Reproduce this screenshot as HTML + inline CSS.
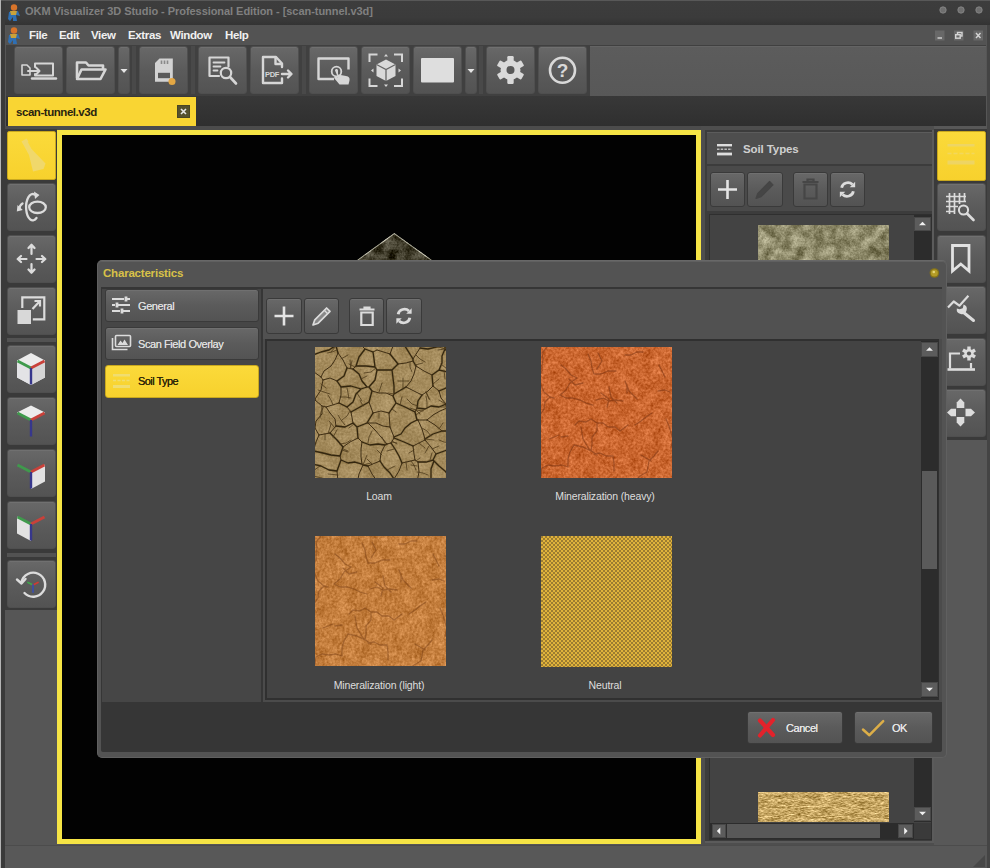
<!DOCTYPE html>
<html lang="en">
<head>
<meta charset="utf-8">
<title>OKM Visualizer 3D Studio</title>
<style>
*{box-sizing:border-box;margin:0;padding:0}
html,body{width:990px;height:868px;overflow:hidden}
body{position:relative;background:#565656;font-family:"Liberation Sans",sans-serif;font-size:11px;color:#e4e4e4}
.a{position:absolute}
.btn{position:absolute;border-radius:3px;background:linear-gradient(#686868,#5b5b5b 50%,#535353);border:1px solid #4f4f4f;box-shadow:inset 0 1px 0 #707070}
.btn.o{border-color:#3a3a3a}
.btn svg{position:absolute;left:-1px;top:-1px;width:calc(100% + 2px);height:calc(100% + 2px);overflow:visible}
.ybtn{position:absolute;border-radius:2px;background:linear-gradient(#fbda3a,#f7d12d);border:1px solid #c9a81e}
.ybtn svg{position:absolute;left:-1px;top:-1px;width:calc(100% + 2px);height:calc(100% + 2px);overflow:visible}
.menu span{position:absolute;top:0;line-height:20px;font-size:11.5px;color:#f0f0f0;font-weight:bold;letter-spacing:-0.35px}
.lbl{position:absolute;text-align:center;font-size:10.5px;color:#dedede;white-space:nowrap;letter-spacing:-0.15px}
.sb{position:absolute;background:#2c2c2c}
.sba{position:absolute;background:#5c5c5c;border:1px solid #484848}
.sba svg{position:absolute;left:0;top:0;width:100%;height:100%}
</style>
</head>
<body>
<!-- SVG filters for soil textures -->
<svg width="0" height="0" style="position:absolute">
<defs>
<filter id="fLoam" x="0" y="0" width="100%" height="100%" color-interpolation-filters="sRGB">
  <feTurbulence type="fractalNoise" baseFrequency="0.06" numOctaves="3" seed="4" result="n1"/>
  <feColorMatrix in="n1" type="matrix" values="1 0 0 0 0  1 0 0 0 0  1 0 0 0 0  0 0 0 0 1" result="g1"/>
  <feTurbulence type="fractalNoise" baseFrequency="0.45" numOctaves="2" seed="9" result="n2"/>
  <feColorMatrix in="n2" type="matrix" values="0 1 0 0 0  0 1 0 0 0  0 1 0 0 0  0 0 0 0 1" result="g2"/>
  <feComposite in="SourceGraphic" in2="g1" operator="arithmetic" k1="0" k2="1" k3="0.14" k4="-0.07" result="a"/>
  <feComposite in="a" in2="g2" operator="arithmetic" k1="0" k2="1" k3="0.18" k4="-0.09" result="b"/>
  <feComposite in="b" in2="SourceAlpha" operator="in"/>
</filter>
<filter id="fGrain" x="0" y="0" width="100%" height="100%" color-interpolation-filters="sRGB">
  <feTurbulence type="fractalNoise" baseFrequency="0.09" numOctaves="4" seed="7" result="n1"/>
  <feColorMatrix in="n1" type="matrix" values="1 0 0 0 0  1 0 0 0 0  1 0 0 0 0  0 0 0 0 1" result="g1"/>
  <feTurbulence type="fractalNoise" baseFrequency="0.4" numOctaves="2" seed="12" result="n2"/>
  <feColorMatrix in="n2" type="matrix" values="0 1 0 0 0  0 1 0 0 0  0 1 0 0 0  0 0 0 0 1" result="g2"/>
  <feComposite in="SourceGraphic" in2="g1" operator="arithmetic" k1="0" k2="1" k3="0.2" k4="-0.1" result="a"/>
  <feComposite in="a" in2="g2" operator="arithmetic" k1="0" k2="1" k3="0.3" k4="-0.15" result="b"/>
  <feComposite in="b" in2="SourceAlpha" operator="in"/>
</filter>
<filter id="fGrainB" x="0" y="0" width="100%" height="100%" color-interpolation-filters="sRGB">
  <feTurbulence type="fractalNoise" baseFrequency="0.09" numOctaves="4" seed="21" result="n1"/>
  <feColorMatrix in="n1" type="matrix" values="1 0 0 0 0  1 0 0 0 0  1 0 0 0 0  0 0 0 0 1" result="g1"/>
  <feTurbulence type="fractalNoise" baseFrequency="0.4" numOctaves="2" seed="26" result="n2"/>
  <feColorMatrix in="n2" type="matrix" values="0 1 0 0 0  0 1 0 0 0  0 1 0 0 0  0 0 0 0 1" result="g2"/>
  <feComposite in="SourceGraphic" in2="g1" operator="arithmetic" k1="0" k2="1" k3="0.2" k4="-0.1" result="a"/>
  <feComposite in="a" in2="g2" operator="arithmetic" k1="0" k2="1" k3="0.28" k4="-0.14" result="b"/>
  <feComposite in="b" in2="SourceAlpha" operator="in"/>
</filter>
<filter id="fGrain2" x="0" y="0" width="100%" height="100%" color-interpolation-filters="sRGB">
  <feTurbulence type="fractalNoise" baseFrequency="0.09" numOctaves="3" seed="3" result="n1"/>
  <feColorMatrix in="n1" type="matrix" values="1 0 0 0 0  1 0 0 0 0  1 0 0 0 0  0 0 0 0 1" result="g1"/>
  <feTurbulence type="fractalNoise" baseFrequency="0.55" numOctaves="2" seed="8" result="n2"/>
  <feColorMatrix in="n2" type="matrix" values="0 1 0 0 0  0 1 0 0 0  0 1 0 0 0  0 0 0 0 1" result="g2"/>
  <feComposite in="SourceGraphic" in2="g1" operator="arithmetic" k1="0" k2="1" k3="0.55" k4="-0.275" result="a"/>
  <feComposite in="a" in2="g2" operator="arithmetic" k1="0" k2="1" k3="0.28" k4="-0.14" result="b"/>
  <feComposite in="b" in2="SourceAlpha" operator="in"/>
</filter>
<filter id="fStraw" x="0" y="0" width="100%" height="100%" color-interpolation-filters="sRGB">
  <feTurbulence type="fractalNoise" baseFrequency="0.08 0.3" numOctaves="3" seed="5" result="n1"/>
  <feColorMatrix in="n1" type="matrix" values="1 0 0 0 0  1 0 0 0 0  1 0 0 0 0  0 0 0 0 1" result="g1"/>
  <feTurbulence type="fractalNoise" baseFrequency="0.3 0.9" numOctaves="2" seed="10" result="n2"/>
  <feColorMatrix in="n2" type="matrix" values="0 1 0 0 0  0 1 0 0 0  0 1 0 0 0  0 0 0 0 1" result="g2"/>
  <feComposite in="SourceGraphic" in2="g1" operator="arithmetic" k1="0" k2="1" k3="0.4" k4="-0.2" result="a"/>
  <feComposite in="a" in2="g2" operator="arithmetic" k1="0" k2="1" k3="0.6" k4="-0.3" result="b"/>
  <feComposite in="b" in2="SourceAlpha" operator="in"/>
</filter>
</defs>
</svg>

<!-- ===== title bar ===== -->
<div class="a" id="titlebar" style="left:0;top:0;width:990px;height:25px;background:linear-gradient(#3d3d3d,#3b3b3b 70%,#333)"></div>
<div class="a" style="left:25px;top:5px;font-size:11px;font-weight:bold;color:#808080;white-space:nowrap;letter-spacing:-0.05px" id="title">OKM Visualizer 3D Studio - Professional Edition - [scan-tunnel.v3d]</div>

<!-- ===== menu bar ===== -->
<div class="a" id="menubar" style="left:6px;top:25px;width:980px;height:20px;background:#535353"></div>
<div class="a menu" style="left:0;top:25px;width:990px;height:20px">
<span style="left:29px">File</span><span style="left:59px">Edit</span><span style="left:91px">View</span><span style="left:128px">Extras</span><span style="left:170px">Window</span><span style="left:225px">Help</span>
</div>

<!-- ===== toolbar ===== -->
<div class="a" id="toolbar" style="left:6px;top:45px;width:980px;height:51px;background:#404040"></div><div class="a" style="left:590px;top:46px;width:396px;height:50px;background:linear-gradient(#5c5c5c,#585858);border-top:1px solid #646464"></div>

<!-- ===== tab band ===== -->
<div class="a" id="tabband" style="left:6px;top:96px;width:980px;height:30px;background:linear-gradient(#383838,#2f2f2f)"></div>
<div class="a" id="tab" style="left:8px;top:97px;width:188px;height:30px;background:#f9d533"></div>
<div class="a" id="tabtxt" style="left:16px;top:105.5px;font-size:11.5px;color:#2a2410;font-weight:bold;letter-spacing:-0.45px">scan-tunnel.v3d</div>


<!-- title icons -->
<svg class="a" style="left:7px;top:3px" width="16" height="19" viewBox="0 0 16 19"><circle cx="7" cy="4.5" r="3.2" fill="#d8742a"/><path d="M2 9 L11 8 L13 13 L9 12 L10 18 L6 18 L6 14 L3 18 L1 16 Z" fill="#2f6fb3"/><path d="M3 8 L10 8 L9 12 L4 12Z" fill="#c9a23a"/></svg>
<svg class="a" style="left:7px;top:26px" width="16" height="19" viewBox="0 0 16 19"><circle cx="7" cy="4.5" r="3.2" fill="#d8742a"/><path d="M2 9 L11 8 L13 13 L9 12 L10 18 L6 18 L6 14 L3 18 L1 16 Z" fill="#2f6fb3"/><path d="M3 8 L10 8 L9 12 L4 12Z" fill="#c9a23a"/></svg>
<!-- window dots -->
<svg class="a" style="left:930px;top:2px" width="60" height="18" viewBox="0 0 60 18"><g fill="#6f6f6f" stroke="#8a8a8a" stroke-width="0.8"><circle cx="13" cy="8" r="3.2"/><circle cx="31" cy="8" r="3.2"/><circle cx="49" cy="8" r="3.2"/></g></svg>
<!-- MDI controls -->
<svg class="a" style="left:932px;top:28px" width="56" height="14" viewBox="0 0 56 14"><g fill="#686868"><rect x="3" y="2.500" width="9.500" height="10"/><rect x="22" y="2.500" width="9.500" height="10"/><rect x="41.500" y="2.500" width="9.500" height="10"/></g><g stroke="#d4d4d4" stroke-width="1.400" fill="none"><path d="M5.500 10h4.500"/><rect x="25.500" y="4.500" width="4.500" height="3.500"/><rect x="23.700" y="6.700" width="4.500" height="3.500" fill="#686868"/><path d="M44 5l4.500 5M48.500 5l-4.500 5"/></g></svg>

<!-- toolbar buttons -->
<div class="btn" style="left:14px;top:46px;width:49px;height:48px"><svg viewBox="0 0 49 48"><g fill="none" stroke="#d6d6d6" stroke-width="2" stroke-linejoin="round" stroke-linecap="round"><path d="M8 19h5l3 3v7h-8z" stroke-width="1.6"/><path d="M14 25h11M22 21.5l3.5 3.5-3.5 3.5"/><path d="M21 21v-3.500h18v12h-18v-1.500"/><path d="M18 32.500h24" stroke-width="2.4"/></g></svg></div>
<div class="btn" style="left:66px;top:46px;width:49px;height:48px"><svg viewBox="0 0 49 48"><path d="M11 32V16.500h9l2.500 3h14.500v3.500" fill="none" stroke="#d6d6d6" stroke-width="2.6" stroke-linejoin="round"/><path d="M15.500 23.500h24l-5 9.500h-23.500z" fill="#555" stroke="#d6d6d6" stroke-width="2.600" stroke-linejoin="round"/></svg></div>
<div class="btn" style="left:118px;top:46px;width:12px;height:48px"><svg viewBox="0 0 12 48"><path d="M2.500 23h7l-3.500 4z" fill="#e6e6e6"/></svg></div>
<div class="a" style="left:132px;top:46px;width:4px;height:48px;background:#494949"></div>
<div class="btn" style="left:139px;top:46px;width:49px;height:48px"><svg viewBox="0 0 49 48"><path d="M16 17l4.500-4.600h13.300v23.300h-17.800z" fill="#d2d2d2"/><rect x="19" y="26.800" width="12" height="5.400" fill="#5a5a5a"/><path d="M22.500 14.500v3.500M25.500 14.500v3.500M28.500 14.500v3.500" stroke="#8a8a8a" stroke-width="1.600"/><circle cx="33" cy="35.500" r="3.500" fill="#e3a744"/></svg></div>
<div class="a" style="left:191px;top:46px;width:4px;height:48px;background:#494949"></div>
<div class="btn" style="left:198px;top:46px;width:49px;height:48px"><svg viewBox="0 0 49 48"><g fill="none" stroke="#d6d6d6" stroke-width="2.200" stroke-linecap="round" stroke-linejoin="round"><path d="M21 30h-9.500v-18.500h19v9"/><path d="M15.500 16.500h11M15.500 20.500h7M15.500 24.500h4" stroke-width="1.800"/><circle cx="28" cy="27" r="5.200"/><path d="M32 31l6 6.500" stroke-width="2.600"/></g></svg></div>
<div class="btn" style="left:250px;top:46px;width:49px;height:48px"><svg viewBox="0 0 49 48"><g fill="none" stroke="#d6d6d6" stroke-width="2.400" stroke-linejoin="round" stroke-linecap="round"><path d="M32 21v-3.500l-6-6.500h-13v26h19v-4.500"/><path d="M25.500 11.500v6.500h6"/><path d="M32 28h9M38 24.500l3.500 3.500-3.500 3.500"/></g><text x="15" y="31" font-family="Liberation Sans,sans-serif" font-size="7.500" font-weight="bold" fill="#d6d6d6" letter-spacing="-0.3">PDF</text></svg></div>
<div class="a" style="left:302px;top:46px;width:4px;height:48px;background:#494949"></div>
<div class="btn" style="left:309px;top:46px;width:49px;height:48px"><svg viewBox="0 0 49 48"><path d="M25 33h-15.500v-20.500h30v11" fill="none" stroke="#d6d6d6" stroke-width="2.400" stroke-linejoin="round"/><circle cx="27.500" cy="25.500" r="4.800" fill="none" stroke="#d6d6d6" stroke-width="1.800"/><path d="M26 24.500c0-2 3-2 3 0v4l8 1.500c3 .5 4 2 3.500 4.500l-1 4h-9l-5-6c-1-1.500.5-3 2-2l1.500 1z" fill="#d6d6d6"/></svg></div>
<div class="btn" style="left:361px;top:46px;width:49px;height:48px"><svg viewBox="0 0 49 48"><g fill="none" stroke="#d6d6d6" stroke-width="2"><path d="M8.500 16v-7.500h8M33 8.500h8v7.500M41 32.500v7.500h-8M16.500 40h-8v-7.500"/></g><path d="M25 13.500l9.500 5v11.500l-9.500 5-9.500-5v-11.500z" fill="#d9d9d9"/><path d="M15.500 18.500l9.500 5 9.500-5M25 23.500v11.500" fill="none" stroke="#666" stroke-width="1.300"/><path d="M25 8l2 2.500h-4zM25 41l2-2.500h-4zM10 24.500l2.500-2v4zM40 24.500l-2.500-2v4z" fill="#d6d6d6"/></svg></div>
<div class="btn" style="left:413px;top:46px;width:49px;height:48px"><svg viewBox="0 0 49 48"><rect x="8" y="12" width="33" height="24.500" rx="1" fill="#dedede"/></svg></div>
<div class="btn" style="left:465px;top:46px;width:12px;height:48px"><svg viewBox="0 0 12 48"><path d="M2.500 23h7l-3.500 4z" fill="#e6e6e6"/></svg></div>
<div class="a" style="left:479px;top:46px;width:4px;height:48px;background:#494949"></div>
<div class="btn" style="left:486px;top:46px;width:49px;height:48px"><svg viewBox="0 0 49 48"><g transform="translate(24.500 24)"><g fill="#d9d9d9"><circle r="10"/><g id="gt"><rect x="-3.200" y="-14" width="6.400" height="28" rx="1.200"/></g><use href="#gt" transform="rotate(60)"/><use href="#gt" transform="rotate(120)"/></g><circle r="4" fill="#585858"/></g></svg></div>
<div class="btn" style="left:538px;top:46px;width:49px;height:48px"><svg viewBox="0 0 49 48"><circle cx="24.500" cy="24.300" r="12.500" fill="none" stroke="#d9d9d9" stroke-width="2.600"/><text x="24.500" y="31" text-anchor="middle" font-family="Liberation Sans,sans-serif" font-size="19" font-weight="bold" fill="#d9d9d9">?</text></svg></div>
<!-- tab close -->
<div class="a" style="left:177px;top:105px;width:13px;height:13px;background:#55512e;border:1px solid #4a4624"><svg class="a" style="left:0;top:0" width="11" height="11" viewBox="0 0 11 11"><path d="M3 3l5 5M8 3l-5 5" stroke="#e6e6e6" stroke-width="1.600"/></svg></div>

<div class="a" style="left:5px;top:126px;width:982px;height:4px;background:#4c4c4c"></div>
<!-- ===== viewport ===== -->
<div class="a" id="viewport" style="left:57px;top:130px;width:644px;height:714px;background:#020202;border:5px solid #f6e445"></div>


<!-- ===== left toolbar ===== -->
<div class="a" style="left:5px;top:129px;width:52px;height:481px;background:#3a3a3a"></div>
<div class="ybtn" style="left:7px;top:131px;width:49px;height:49px"><svg viewBox="0 0 49 49"><g fill="#efd976" opacity="0.85"><path d="M15.500 12l4.500-2.500 4.500 8.500 14 14.500-2 5.500-10.500 2.500-4-16.500z"/><path d="M14.500 10.500l5-3 2 3-5 3z"/></g></svg></div>
<div class="btn" style="left:7px;top:183px;width:49px;height:48px"><svg viewBox="0 0 49 48"><g fill="none" stroke="#dcdcdc" stroke-width="2.300" stroke-linecap="round"><ellipse cx="30.500" cy="24.300" rx="8.300" ry="5.700"/><path d="M27.500 11.500A6.600 13.200 0 1 0 29.500 35"/><path d="M15.500 20.500Q12.500 22.500 12.500 25.500"/></g><path d="M27 8.500l5.500 3.500-4.500 4zM9.800 28.500l.7-6.500 5.300 5z" fill="#dcdcdc"/></svg></div>
<div class="btn" style="left:7px;top:235px;width:49px;height:48px"><svg viewBox="0 0 49 48"><g fill="none" stroke="#dcdcdc" stroke-width="2.200" stroke-linecap="round" stroke-linejoin="round"><path d="M24.500 19v-8.500M21.500 13l3-3.300 3 3.300M24.500 29v8M21.500 34.500l3 3.300 3-3.300M19.500 24h-8M14 21l-3.300 3 3.300 3M29.500 24h8M35 21l3.300 3-3.300 3"/></g></svg></div>
<div class="btn" style="left:7px;top:287px;width:49px;height:48px"><svg viewBox="0 0 49 48"><path d="M15.300 21v-10.700h22v22h-11.500" fill="none" stroke="#dcdcdc" stroke-width="2.200"/><rect x="10.500" y="23" width="13.500" height="14" fill="#d8d8d8"/><path d="M25.500 22l7-7.500M27.500 14h5.500v5.500" fill="none" stroke="#dcdcdc" stroke-width="2.200"/></svg></div>
<div class="a" style="left:7px;top:338px;width:49px;height:4px;background:#525252"></div>
<div class="btn" style="left:7px;top:345px;width:49px;height:48px"><svg viewBox="0 0 49 48"><path d="M24 8l14 7.500v17l-14 7.500-14-7.500v-17z" fill="#ececec"/><path d="M24 23l14-7.500v17l-14 7.500z" fill="#d6d6d6"/><path d="M24 23l-14-7.500v17l14 7.500z" fill="#e3e3e6"/><g stroke-width="2.800" stroke-linecap="butt"><path d="M24 23L10.500 16" stroke="#3f9a4c"/><path d="M24 23L37.500 16" stroke="#c9413a"/><path d="M24 23V39.500" stroke="#37378c" stroke-width="2.400"/></g></svg></div>
<div class="btn" style="left:7px;top:397px;width:49px;height:48px"><svg viewBox="0 0 49 48"><path d="M24 8.500l14 7-14 7.500-14-7.500z" fill="#ececec"/><g stroke-width="2.800" stroke-linecap="butt"><path d="M24 23L10.500 16" stroke="#3f9a4c"/><path d="M24 23L37.500 16" stroke="#c9413a"/><path d="M24 23V39.500" stroke="#37378c" stroke-width="2.400"/></g></svg></div>
<div class="btn" style="left:7px;top:449px;width:49px;height:48px"><svg viewBox="0 0 49 48"><path d="M24 23l14-7.500v17l-14 7.500z" fill="#e2e2e2"/><g stroke-width="2.800" stroke-linecap="butt"><path d="M24 23L10.500 16" stroke="#3f9a4c"/><path d="M24 23L37.500 16" stroke="#c9413a"/><path d="M24 23V39.500" stroke="#37378c" stroke-width="2.400"/></g></svg></div>
<div class="btn" style="left:7px;top:501px;width:49px;height:48px"><svg viewBox="0 0 49 48"><path d="M24 23l-14-7.500v17l14 7.500z" fill="#e2e2e2"/><g stroke-width="2.800" stroke-linecap="butt"><path d="M24 23L10.500 16" stroke="#3f9a4c"/><path d="M24 23L37.500 16" stroke="#c9413a"/><path d="M24 23V39.500" stroke="#37378c" stroke-width="2.400"/></g></svg></div>
<div class="a" style="left:7px;top:553px;width:49px;height:4px;background:#525252"></div>
<div class="btn" style="left:7px;top:560px;width:49px;height:48px"><svg viewBox="0 0 49 48"><path d="M14.500 22a12 12 0 1 1 3 11" fill="none" stroke="#dcdcdc" stroke-width="2.400" stroke-linecap="round"/><path d="M10 19.500l4.500 4 4-4.500" fill="none" stroke="#dcdcdc" stroke-width="2.400" stroke-linecap="round" stroke-linejoin="round"/><g stroke-width="1.800" stroke-linecap="round"><path d="M26 25l-5-2.500" stroke="#3fa64a"/><path d="M26 25l5-2.500" stroke="#d03a32"/><path d="M26 25v7" stroke="#3c4ea8"/></g></svg></div>


<!-- ===== right panel ===== -->
<div class="a" style="left:701px;top:126px;width:289px;height:719px;background:#4e4e4e"></div><div class="a" style="left:934px;top:126px;width:53px;height:719px;background:#585858"></div>
<div class="a" style="left:705px;top:130px;width:229px;height:713px;background:#3c3c3c;border-right:2px solid #5b5b5b;border-bottom:2px solid #5b5b5b"></div>
<div class="a" id="rphead" style="left:707px;top:132px;width:225px;height:32px;background:#4e4e4e;border-top:1px solid #5c5c5c"></div>
<svg class="a" style="left:716px;top:143px" width="18" height="14" viewBox="0 0 18 14"><g fill="#dedede"><rect x="1" y="1" width="15" height="2.400"/><rect x="1" y="9.600" width="15" height="2.800"/></g><path d="M1 6.300h15" stroke="#bdbdbd" stroke-width="1.400" stroke-dasharray="2.500 1.200"/></svg>
<div class="a" style="left:743px;top:143px;font-size:11.500px;font-weight:bold;color:#d0d0d0;letter-spacing:-0.1px">Soil Types</div>
<div class="a" style="left:707px;top:166px;width:225px;height:45px;background:#4a4a4a"></div>
<div class="btn o" style="left:710px;top:172px;width:35px;height:35px"><svg viewBox="0 0 35 35"><path d="M17.500 8v19M8 17.500h19" stroke="#e4e4e4" stroke-width="2.600"/></svg></div>
<div class="btn o" style="left:747px;top:172px;width:36px;height:35px"><svg viewBox="0 0 36 35"><path d="M9 26.500l1.800-5.200 11.800-11.800 3.400 3.400-11.800 11.800z" fill="#454545" stroke="#454545" stroke-width="1.200" stroke-linejoin="round"/></svg></div>
<div class="btn o" style="left:793px;top:172px;width:35px;height:35px"><svg viewBox="0 0 35 35"><g fill="none" stroke="#464646" stroke-width="2.200"><path d="M11.500 12.500h12v14h-12z"/><path d="M9.500 10h16M14.500 9.500v-2h6v2"/></g></svg></div>
<div class="btn o" style="left:830px;top:172px;width:35px;height:35px"><svg viewBox="0 0 35 35"><g transform="translate(17.500 17.500) scale(0.9) translate(-17.500 -17.500)"><g fill="none" stroke="#dcdcdc" stroke-width="3.100"><path d="M11 15.500a7 6.500 0 0 1 12-3.500"/><path d="M24 19.500a7 6.500 0 0 1-12 3.500"/></g><path d="M26 9v6h-6zM9 26v-6h6z" fill="#dcdcdc"/></g></svg></div>
<div class="a" style="left:709px;top:214px;width:223px;height:626px;background:#434343;border:1px solid #2f2f2f"></div>
<!-- list scrollbars -->
<div class="sb" style="left:914px;top:215px;width:17px;height:607px"></div>
<div class="sba" style="left:914px;top:217px;width:17px;height:14px"><svg viewBox="0 0 17 14"><path d="M4.500 8.500l4-4 4 4z" fill="#f0f0f0"/></svg></div>
<div class="sba" style="left:914px;top:807px;width:17px;height:14px"><svg viewBox="0 0 17 14"><path d="M4.500 4.500l4 4 4-4z" fill="#f0f0f0"/></svg></div>
<div class="sb" style="left:710px;top:823px;width:204px;height:16px"></div>
<div class="a" style="left:914px;top:823px;width:17px;height:16px;background:#3a3a3a"></div>
<div class="sba" style="left:712px;top:824px;width:14px;height:14px"><svg viewBox="0 0 14 14"><path d="M8.500 3l-4 4 4 4z" fill="#f0f0f0"/></svg></div>
<div class="sba" style="left:898px;top:824px;width:15px;height:14px"><svg viewBox="0 0 15 14"><path d="M6 3l4 4-4 4z" fill="#f0f0f0"/></svg></div>
<div class="a" style="left:727px;top:824px;width:153px;height:14px;background:#585858"></div>
<!-- soil thumbs in right list -->
<svg class="a" style="left:758px;top:225px" width="131" height="40"><rect width="131" height="40" fill="#8c8868" filter="url(#fGrain2)"/></svg>
<svg class="a" style="left:758px;top:792px" width="131" height="30"><rect width="131" height="30" fill="#c6a663" filter="url(#fStraw)"/></svg>

<!-- ===== right toolbar ===== -->
<div class="a" style="left:934px;top:129px;width:53px;height:311px;background:#3a3a3a"></div>

<div class="ybtn" style="left:937px;top:131px;width:49px;height:50px"><svg viewBox="0 0 49 50"><g fill="#ecd570" opacity="0.8"><rect x="10.500" y="13" width="27" height="2.500"/><rect x="10.500" y="29.500" width="27" height="4"/></g><path d="M10.500 22.500h27" stroke="#efd978" stroke-width="1.600" stroke-dasharray="4 2" opacity="0.6"/></svg></div>
<div class="btn" style="left:937px;top:183px;width:49px;height:48px"><svg viewBox="0 0 49 48"><g fill="none" stroke="#dcdcdc" stroke-width="1.700"><path d="M9 13.500h20M9 18.500h20M9 23.500h12M9 28.500h9M12.500 10v21M17.500 10v21M22.500 10v11M27.500 10v9"/><circle cx="26.500" cy="27" r="4.600" stroke-width="2"/><path d="M30 30.500l6.500 6.500" stroke-width="2.600" stroke-linecap="round"/></g></svg></div>
<div class="btn" style="left:937px;top:235px;width:49px;height:48px"><svg viewBox="0 0 49 48"><path d="M15.500 10.500h16.500v25.500l-8.200-7-8.300 7z" fill="none" stroke="#e2e2e2" stroke-width="2.800" stroke-linejoin="miter"/></svg></div>
<div class="btn" style="left:937px;top:286px;width:49px;height:48px"><svg viewBox="0 0 49 48"><path d="M11 21.500l5.700-6 5.700 4.200 9-10" fill="none" stroke="#dcdcdc" stroke-width="2.200" stroke-linejoin="round"/><path d="M26 26l10.500 8.500" stroke="#dcdcdc" stroke-width="3" stroke-linecap="round"/><path d="M19.800 22.500a5 5 0 1 0 6.800-4l-.8 3.800-3.200 1z" fill="#dcdcdc"/></svg></div>
<div class="btn" style="left:937px;top:338px;width:49px;height:48px"><svg viewBox="0 0 49 48"><path d="M23 15.500h-10v15M34 25v5.500" fill="none" stroke="#dcdcdc" stroke-width="2.200"/><path d="M10.500 31.500h27.500" stroke="#dcdcdc" stroke-width="2.600"/><g transform="translate(32 15.500)" fill="#dcdcdc"><circle r="4.600"/><rect x="-1.700" y="-7" width="3.400" height="14"/><rect x="-1.700" y="-7" width="3.400" height="14" transform="rotate(60)"/><rect x="-1.700" y="-7" width="3.400" height="14" transform="rotate(120)"/><circle r="2.100" fill="#585858"/></g></svg></div>
<div class="btn" style="left:937px;top:389px;width:49px;height:48px"><svg viewBox="0 0 49 48"><g fill="#dcdcdc"><path d="M23.500 9.500l3.800 4v5.500h-7.600v-5.500z"/><path d="M23.500 37.500l3.800-4v-5.500h-7.600v5.500z"/><path d="M10 23.500l4-3.800h5v7.600h-5z"/><path d="M38 23.500l-4-3.800h-5.500v7.600h5.500z"/></g></svg></div>


<svg class="a" style="left:350px;top:228px" width="90" height="36" viewBox="0 0 90 36"><path d="M44.300 5.500L7 32.500H82z" fill="#3b3726" stroke="#b4b2a0" stroke-width="1.200" stroke-linejoin="round" filter="url(#fGrain2)"/></svg>
<!-- ===== Characteristics dialog ===== -->
<div class="a" id="dlg" style="left:97px;top:260px;width:850px;height:498px;background:#535353;border:1px solid #606060;border-top-color:#686868;border-radius:5px;box-shadow:inset 0 1px 0 #606060"></div>
<div class="a" style="left:103px;top:267px;font-size:11.500px;font-weight:bold;color:#d8c148;letter-spacing:-0.2px">Characteristics</div>
<svg class="a" style="left:927px;top:266px" width="14" height="14" viewBox="0 0 14 14"><circle cx="7.400" cy="7" r="4.800" fill="#85731a"/><circle cx="7.400" cy="7" r="3.500" fill="#b49c26"/><circle cx="6.800" cy="6" r="1.300" fill="#e4d678"/></svg>
<div class="a" style="left:101px;top:287px;width:841px;height:465px;background:#363636;border-radius:0 0 2px 2px"></div>
<!-- sidebar -->
<div class="a" style="left:102px;top:289px;width:159px;height:413px;background:#464646"></div>
<div class="btn o" style="left:105px;top:289px;width:154px;height:33px"><svg viewBox="0 0 154 33"><g stroke="#dcdcdc" stroke-width="1.800" fill="none"><path d="M7 10h12M21 10h4M7 16h3M13 16h12M7 22h8M18 22h7"/><path d="M21 7.500v5M12 13.500v5M17 19.500v5" stroke-width="2.800"/></g></svg></div>
<div class="a" style="left:138px;top:300px;font-size:11px;color:#dcdcdc;letter-spacing:-0.4px;text-shadow:0 0 0.5px #dcdcdc">General</div>
<div class="btn o" style="left:105px;top:327px;width:154px;height:33px"><svg viewBox="0 0 154 33"><g stroke="#dcdcdc" stroke-width="1.600" fill="none"><rect x="10.500" y="8.500" width="15" height="11" rx="1"/><path d="M7.500 11v11.500h15"/></g><path d="M12.500 18l3-4.500 2 2.500 2-3.500 3.500 5.500z" fill="#dcdcdc"/></svg></div>
<div class="a" style="left:138px;top:338px;font-size:11px;color:#dcdcdc;letter-spacing:-0.42px;text-shadow:0 0 0.5px #dcdcdc">Scan Field Overlay</div>
<div class="ybtn" style="left:105px;top:365px;width:154px;height:33px;border-radius:3px"><svg viewBox="0 0 154 33"><g fill="#f0dd70"><rect x="8" y="9" width="17" height="2.500"/><rect x="8" y="20" width="17" height="3"/></g><path d="M8 15.500h17" stroke="#f0dd70" stroke-width="1.600" stroke-dasharray="3 1.500"/></svg></div>
<div class="a" style="left:138px;top:375px;font-size:11px;color:#2c2508;letter-spacing:-0.55px;text-shadow:0 0 0.5px #2c2508">Soil Type</div>
<!-- content -->
<div class="a" style="left:263px;top:289px;width:679px;height:413px;background:#4b4b4b"></div>
<div class="a" style="left:263px;top:289px;width:679px;height:50px;background:#515151"></div>
<div class="btn o" style="left:266px;top:298px;width:36px;height:36px"><svg viewBox="0 0 36 36"><path d="M18 8.500v19M8.500 18h19" stroke="#e4e4e4" stroke-width="2.600"/></svg></div>
<div class="btn o" style="left:304px;top:298px;width:35px;height:36px"><svg viewBox="0 0 35 36"><path d="M9 27l1.800-5.200 11.800-11.800 3.400 3.400-11.800 11.800z" fill="#dcdcdc" fill-opacity="0.350" stroke="#dcdcdc" stroke-width="1.700" stroke-linejoin="round"/><path d="M20.300 12.300l3.400 3.400" stroke="#dcdcdc" stroke-width="1.300"/></svg></div>
<div class="btn o" style="left:349px;top:298px;width:35px;height:36px"><svg viewBox="0 0 35 36"><g fill="none" stroke="#dcdcdc" stroke-width="2.200"><path d="M12.300 14.500h11.400v12.500h-11.400z"/><path d="M10.500 11.500h15M15.500 11v-1.500h5v1.500"/></g></svg></div>
<div class="btn o" style="left:386px;top:298px;width:36px;height:36px"><svg viewBox="0 0 36 36"><g transform="translate(18 18) scale(0.9) translate(-18 -18)"><g fill="none" stroke="#dcdcdc" stroke-width="3.100"><path d="M11.500 16a7 6.500 0 0 1 12-3.500"/><path d="M24.500 20a7 6.500 0 0 1-12 3.500"/></g><path d="M26.500 9.500v6h-6zM9.500 26.500v-6h6z" fill="#dcdcdc"/></g></svg></div>
<div class="a" id="dlist" style="left:265px;top:339px;width:674px;height:361px;background:#434343;border:2px solid #303030;border-right-width:1px"></div>
<div class="sb" style="left:921px;top:341px;width:17px;height:357px"></div>
<div class="sba" style="left:921px;top:342px;width:17px;height:15px"><svg viewBox="0 0 17 15"><path d="M4.500 9l4-4 4 4z" fill="#f0f0f0"/></svg></div>
<div class="sba" style="left:921px;top:682px;width:17px;height:15px"><svg viewBox="0 0 17 15"><path d="M4.500 5.500l4 4 4-4z" fill="#f0f0f0"/></svg></div>
<div class="a" style="left:922px;top:471px;width:15px;height:98px;background:#5a5a5a"></div>
<!-- soil tiles -->
<svg class="a" style="left:315px;top:347px" width="131" height="131" viewBox="0 0 131 131"><rect width="131" height="131" fill="#a58c5d" filter="url(#fLoam)"/><g fill="none" stroke-linecap="round" stroke-linejoin="round"><path d="M135 130L130 124L124 119L119 114M62 23L70 23L77 23M54 55L45 60L36 65M52 40L47 34L44 27L38 22M132 61L132 69L135 76L134 84M25 109L16 108L8 106L-1 104M21 79L30 80L38 76M58 5L59 12L60 20M60 20L51 19L41 19M48 118L53 119M102 73L96 76L90 81L86 87L79 90M143 25L133 25L124 23M77 23L78 31L79 39L79 47M32 21L29 29L22 34M75 7L83 17M81 56L74 66M103 73L102 73M42 80L38 76M127 84L134 84M124 44L131 41L139 40L145 35M47 117L40 115L33 116L26 113M101 19L98 14M132 103L121 107M46 42L41 47L38 55L32 60M54 40L60 33L62 23M83 17L77 23M32 60L24 56M124 23L117 28M100 65L90 60L81 56M154 -1L146 -2L138 -1L130 0M118 113L121 107M47 95L55 98L63 97L70 98M78 49L81 56M129 -1L121 -0L113 2L105 1M124 23L127 16L127 9L130 2M98 14L98 12M-3 117L-1 126L-1 136M130 0L129 -1M147 20L142 14L136 8L130 2M131 57L124 60L116 59L110 62L102 61M26 40L36 39L46 42M127 84L118 87L110 92M57 44L54 55M65 114L69 120L75 126L79 132M98 12L93 4L88 -4L82 -10M118 113L119 114M133 60L132 61M58 5L50 2M-2 8L6 5L14 3L20 -1M52 40L46 42M102 73L100 65M42 80L52 76M54 40L57 44M0 53L0 52M118 39L117 28M52 76L58 66M28 100L22 93L15 86M107 48L103 54L102 61M62 23L60 20M70 98L72 97M26 113L22 124M87 116L84 109L80 102L76 96M25 109L28 100M26 40L22 34M43 91L42 80M-3 117L6 119L14 123L22 124M98 99L89 95L79 91M50 2L44 10L41 19M79 47L91 40M21 -1L23 6M78 49L79 47M103 115L111 115L118 113M130 2L130 0M113 139L116 131L116 122L119 114M-1 104L-1 102" stroke="#7a6338" stroke-width="2.500" opacity="0.4"/><path d="M135 130L130 124L124 119L119 114M62 23L70 23L77 23M54 55L45 60L36 65M52 40L47 34L44 27L38 22M132 61L132 69L135 76L134 84M25 109L16 108L8 106L-1 104M21 79L30 80L38 76M58 5L59 12L60 20M60 20L51 19L41 19M48 118L53 119M102 73L96 76L90 81L86 87L79 90M143 25L133 25L124 23M77 23L78 31L79 39L79 47M32 21L29 29L22 34M75 7L83 17M81 56L74 66M103 73L102 73M42 80L38 76M127 84L134 84M124 44L131 41L139 40L145 35M47 117L40 115L33 116L26 113M101 19L98 14M132 103L121 107M46 42L41 47L38 55L32 60M54 40L60 33L62 23M83 17L77 23M32 60L24 56M124 23L117 28M100 65L90 60L81 56M154 -1L146 -2L138 -1L130 0M118 113L121 107M47 95L55 98L63 97L70 98M78 49L81 56M129 -1L121 -0L113 2L105 1M124 23L127 16L127 9L130 2M98 14L98 12M-3 117L-1 126L-1 136M130 0L129 -1M147 20L142 14L136 8L130 2M131 57L124 60L116 59L110 62L102 61M26 40L36 39L46 42M127 84L118 87L110 92M57 44L54 55M65 114L69 120L75 126L79 132M98 12L93 4L88 -4L82 -10M118 113L119 114M133 60L132 61M58 5L50 2M-2 8L6 5L14 3L20 -1M52 40L46 42M102 73L100 65M42 80L52 76M54 40L57 44M0 53L0 52M118 39L117 28M52 76L58 66M28 100L22 93L15 86M107 48L103 54L102 61M62 23L60 20M70 98L72 97M26 113L22 124M87 116L84 109L80 102L76 96M25 109L28 100M26 40L22 34M43 91L42 80M-3 117L6 119L14 123L22 124M98 99L89 95L79 91M50 2L44 10L41 19M79 47L91 40M21 -1L23 6M78 49L79 47M103 115L111 115L118 113M130 2L130 0M113 139L116 131L116 122L119 114M-1 104L-1 102" stroke="#33260f" stroke-width="1.300"/><path d="M131 57L133 60M54 40L52 40M11 60L24 56M0 52L6 43L8 33M20 -1L21 -1M54 55L58 66M4 88L1 95L-1 102M26 113L25 109M38 22L32 21M47 117L48 118M79 132L79 133M28 100L35 95L43 91M-7 18L-1 25L6 30M101 19L99 27L96 34L91 40M124 44L126 51L131 57M52 76L53 76M112 73L118 68L125 64L132 61M100 113L103 115M117 28L109 24L101 19M53 76L61 76L68 79L75 80M112 73L103 73M79 91L79 90M11 60L15 66L20 72L21 79M87 116L84 124L79 132M146 117L140 110L132 103M74 66L75 80M53 119L65 114M102 135L104 125L103 115M107 48L113 44L118 39M100 113L87 116M22 34L15 31L8 33M107 48L99 44L91 40M102 61L100 65M26 40L26 48L24 56M98 99L99 107L100 113M47 95L43 91M83 17L91 16L98 14M105 1L98 12M76 96L79 91M36 65L38 76M22 124L23 134M32 21L28 13L23 6M112 73L120 78L127 84M57 44L64 46L71 46L78 49M103 73L107 82L110 92M53 76L60 83L66 90L72 97M136 59L133 60M15 86L21 79M47 117L46 110L46 102L47 95M8 33L6 30M75 80L79 90M53 119L57 127L62 134L66 142M62 3L58 5M7 59L11 60M76 96L72 97M23 6L20 13L16 19L9 24L6 30M0 81L4 88M98 99L110 93M110 93L110 92M129 -7L129 -1M32 60L36 65M4 88L15 86M62 3L75 7M48 118L44 127L42 137M137 92L132 103M121 107L116 100L110 93M38 22L41 19M-3 116L-1 104M58 66L66 64L74 66M21 -1L28 -4L36 -4L43 -5M65 114L66 106L70 98M7 59L0 53M0 81L1 74L7 67L7 59M124 44L118 39M75 7L78 -1L82 -10M50 2L43 -5" stroke="#3f2e14" stroke-width="1"/><path d="M101 8L105 12L110 15M78 -1L71 -1M129 -3L120 0M35 22L37 14M111 45L115 53M72 123L80 119M114 99L110 106M79 102L72 104M18 90L22 83M102 125L108 126L113 128M40 20L34 17M48 118L56 116M64 66L64 71M36 22L35 13M126 17L132 22M135 96L129 95L124 93M101 68L105 65L109 63M132 61L129 56L124 53M39 77L34 81M1 96L-5 95L-10 91M3 43L9 45L15 47M133 60L142 61M28 102L33 104M130 0L138 -5M94 34L88 34L83 34M23 128L13 127M104 96L110 101M6 37L11 41M30 78L26 73L23 68M116 89L112 84L107 81M134 60L132 53M111 45L114 52M143 114L147 110M46 32L52 29M101 63L105 67M95 15L95 20L97 25M77 94L82 97M25 97L31 96L36 93M85 58L87 50M100 18L108 16M88 42L88 36L88 31M-2 129L7 131M57 117L52 112M110 92L119 93M91 115L92 123M25 50L31 50L36 51M-2 124L5 119M21 -1L16 5M32 41L33 46L34 52M64 45L67 36M20 81L14 74M67 108L62 103M53 96L54 90L57 84M115 113L117 106M10 87L10 93M99 103L94 106M117 102L124 99M129 -5L122 -6M103 59L97 57L92 52M9 59L6 65L5 71M101 114L105 111M129 -4L136 -8M61 21L56 25L49 26M77 95L82 96M96 114L99 118L101 123M143 -0L143 5M129 23L130 32M77 62L81 65M42 46L47 54M130 2L124 0L120 -3M71 98L67 90M48 118L50 113L52 108M26 12L33 8M118 37L124 32M27 103L33 105M79 132L74 132L69 132M101 63L95 61M79 47L73 46M13 87L16 77M101 63L108 64M48 59L45 53M130 2L123 3M131 41L134 46L138 51M124 82L128 76M35 64L32 69L27 73M22 3L17 5L12 6M133 60L126 60M112 60L112 55L111 49M18 58L16 53L13 48M102 119L96 118" stroke="#4d3a1a" stroke-width="0.8"/></g></svg>
<svg class="a" style="left:541px;top:347px" width="131" height="131" viewBox="0 0 131 131"><rect width="131" height="131" fill="#cb6730" filter="url(#fGrain)"/><g fill="none" stroke="#7a3414" stroke-width="1.300" stroke-linecap="round" stroke-linejoin="round" opacity="0.55"><path d="M57 6l4 8-5 8M28 32l6 6 8-2M68 40l2 10 6 6M84 34l4 10 8 8M60 46l8 6-2 8M40 80l2 12 6 10 8 6M8 92l10-4M100 108l10 6M118 18l6 12M1 6L2 12L1 18L1 24M1 24L-1 28M10 -8L6 -0L1 6M10 -8L16 -5L22 -5L29 -6M29 -6L31 -3M9 50L3 45L0 38M9 50L13 51M19 48L25 43L29 36L36 31M20 18L25 22L30 28L36 31M19 48L25 51L32 51L39 53L45 56L52 58M53 27L51 21L50 14L47 7M9 50L4 55L3 62L-1 68L-2 74L-8 79M50 72L45 75L38 74L34 78M132 93L130 86L128 79L125 72M130 100L132 93M20 90L27 89M111 66L105 70L100 74L94 78M129 45L124 43L117 44M93 135L99 129L106 125M117 104L113 109L108 114M108 114L106 125M79 84L74 80L67 80L62 76L56 76M56 76L56 84L51 90L51 97L50 104M72 109L65 109L59 106L53 107M87 78L79 84M55 53L62 51L68 54L75 53L82 54M50 72L56 76M33 98L42 100L50 104M27 120L21 118L14 119L7 118M-5 133L0 129L1 121L7 118M33 98L29 105L27 112L27 120M84 8L90 8L96 5L102 5M86 46L86 38M53 27L60 27L67 24L75 24M130 20L139 18M93 135L85 136M72 109L73 116L73 124"/></g></svg>
<svg class="a" style="left:315px;top:536px" width="131" height="130" viewBox="0 0 131 130"><rect width="131" height="130" fill="#c47e3d" filter="url(#fGrainB)"/><g fill="none" stroke="#7c4218" stroke-width="1.300" stroke-linecap="round" stroke-linejoin="round" opacity="0.5"><path d="M57 6l4 8-5 8M28 32l6 6 8-2M68 40l2 10 6 6M84 34l4 10 8 8M60 46l8 6-2 8M40 80l2 12 6 10 8 6M8 92l10-4M100 108l10 6M118 18l6 12M1 6L2 12L1 18L1 24M1 24L-1 28M10 -8L6 -0L1 6M10 -8L16 -5L22 -5L29 -6M29 -6L31 -3M9 50L3 45L0 38M9 50L13 51M19 48L25 43L29 36L36 31M20 18L25 22L30 28L36 31M19 48L25 51L32 51L39 53L45 56L52 58M53 27L51 21L50 14L47 7M9 50L4 55L3 62L-1 68L-2 74L-8 79M50 72L45 75L38 74L34 78M132 93L130 86L128 79L125 72M130 100L132 93M20 90L27 89M111 66L105 70L100 74L94 78M129 45L124 43L117 44M93 135L99 129L106 125M117 104L113 109L108 114M108 114L106 125M79 84L74 80L67 80L62 76L56 76M56 76L56 84L51 90L51 97L50 104M72 109L65 109L59 106L53 107M87 78L79 84M55 53L62 51L68 54L75 53L82 54M50 72L56 76M33 98L42 100L50 104M27 120L21 118L14 119L7 118M-5 133L0 129L1 121L7 118M33 98L29 105L27 112L27 120M84 8L90 8L96 5L102 5M86 46L86 38M53 27L60 27L67 24L75 24M130 20L139 18M93 135L85 136M72 109L73 116L73 124"/></g></svg>
<svg class="a" style="left:541px;top:536px" width="131" height="131"><defs><pattern id="chk" width="4" height="4" patternUnits="userSpaceOnUse"><rect width="4" height="4" fill="#e0b33b"/><rect width="2" height="2" fill="#9c7c32"/><rect x="2" y="2" width="2" height="2" fill="#9c7c32"/></pattern></defs><rect width="131" height="131" fill="url(#chk)"/></svg>
<div class="lbl" style="left:313.5px;top:490px;width:131px">Loam</div>
<div class="lbl" style="left:539.5px;top:490px;width:131px">Mineralization (heavy)</div>
<div class="lbl" style="left:313.5px;top:679px;width:131px">Mineralization (light)</div>
<div class="lbl" style="left:539.5px;top:679px;width:131px">Neutral</div>
<!-- dialog buttons -->
<div class="btn o" style="left:747px;top:711px;width:96px;height:33px"><svg viewBox="0 0 96 33"><path d="M13 9.500l13 14.500M26 9l-13 15.500" stroke="#e3222b" stroke-width="4.200" stroke-linecap="round"/></svg></div>
<div class="a" style="left:786px;top:722px;font-size:11px;color:#e6e6e6;letter-spacing:-0.45px;text-shadow:0 0 0.6px #e6e6e6">Cancel</div>
<div class="btn o" style="left:854px;top:711px;width:79px;height:33px"><svg viewBox="0 0 79 33"><path d="M9 18.500l6.400 5.700 13.800-14" fill="none" stroke="#dcae48" stroke-width="2.500" stroke-linecap="round" stroke-linejoin="round"/></svg></div>
<div class="a" style="left:892px;top:722px;font-size:11px;color:#e6e6e6;letter-spacing:-0.5px;text-shadow:0 0 0.6px #e6e6e6">OK</div>

<!-- ===== status bar ===== -->
<div class="a" id="status" style="left:0;top:845px;width:990px;height:23px;background:#585858;border-top:1px solid #4c4c4c"></div>
<div class="a" style="left:987px;top:25px;width:3px;height:843px;background:#444"></div>
<div class="a" style="left:0;top:0;width:5px;height:868px;background:#3a3a3a"></div><div class="a" style="left:0;top:0;width:1px;height:868px;background:#b4b4b4"></div><div class="a" style="left:1px;top:0;width:989px;height:1px;background:#585858"></div>
<svg class="a" style="left:970px;top:852px" width="16" height="16" viewBox="0 0 16 16"><path d="M15 3v12h-12z" fill="#474747"/></svg>

</body>
</html>
